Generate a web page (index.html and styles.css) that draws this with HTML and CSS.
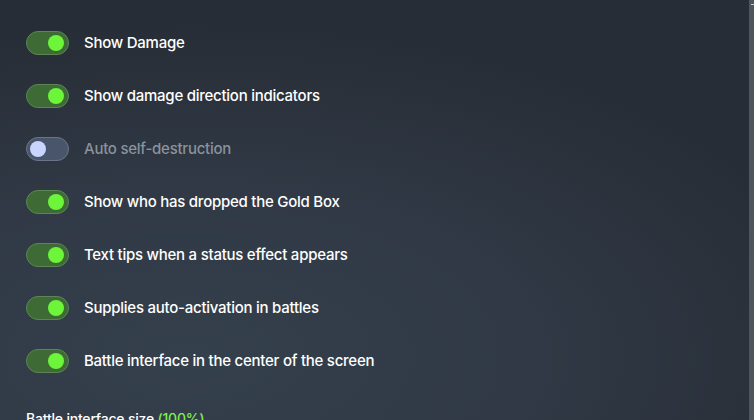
FILE: index.html
```html
<!DOCTYPE html>
<html>
<head>
<meta charset="utf-8">
<link rel="stylesheet" href="styles.css">
</head>
<body>
<div class="page">
  <div class="list">
    <div class="row"><span class="toggle on"><span class="knob"></span></span><span class="label">Show Damage</span></div>
    <div class="row"><span class="toggle on"><span class="knob"></span></span><span class="label">Show damage direction indicators</span></div>
    <div class="row"><span class="toggle off"><span class="knob"></span></span><span class="label dim">Auto self-destruction</span></div>
    <div class="row"><span class="toggle on"><span class="knob"></span></span><span class="label">Show who has dropped the Gold Box</span></div>
    <div class="row"><span class="toggle on"><span class="knob"></span></span><span class="label">Text tips when a status effect appears</span></div>
    <div class="row"><span class="toggle on"><span class="knob"></span></span><span class="label">Supplies auto-activation in battles</span></div>
    <div class="row"><span class="toggle on"><span class="knob"></span></span><span class="label">Battle interface in the center of the screen</span></div>
  </div>
  <div class="size">Battle interface size <span class="pct">(100%)</span></div>
</div>
<div class="scrollbar"><span class="arrow"></span></div>
</body>
</html>
```
FILE: styles.css
```css
html, body {
  margin: 0;
  padding: 0;
  height: 100%;
  overflow: hidden;
}
body {
  background: radial-gradient(ellipse 90% 80% at 25% 85%, #35404d 0%, #303945 50%, #272d36 100%);
  font-family: "Inter", "Roboto", sans-serif;
  color: #ffffff;
}
.page {
  padding: 31px 0 0 26px;
}
.list {
  display: flex;
  flex-direction: column;
  gap: 29px;
}
.row {
  display: flex;
  align-items: center;
  gap: 15px;
  height: 24px;
}
.toggle {
  position: relative;
  box-sizing: border-box;
  width: 43px;
  height: 24px;
  border-radius: 12px;
  flex: none;
  display: flex;
  align-items: center;
}
.toggle.on {
  background: #3e6a36;
  border: 1px solid #5b8653;
  justify-content: flex-end;
  padding-right: 4px;
}
.toggle.off {
  background: #49556a;
  border: 1px solid #6a7588;
  justify-content: flex-start;
  padding-left: 3px;
}
.knob {
  width: 16px;
  height: 16px;
  border-radius: 50%;
}
.on .knob { background: #6df53a; }
.off .knob { background: #c9d5ff; }
.label {
  font-size: 15px;
  font-weight: 500;
  letter-spacing: -0.25px;
  line-height: 24px;
  white-space: nowrap;
}
.label.dim { color: #8a929c; }
.size {
  margin-top: 36px;
  font-size: 14px;
  font-weight: 500;
  letter-spacing: -0.2px;
  line-height: 20px;
}
.pct { color: #7cf04a; }
.scrollbar {
  position: absolute;
  top: 0;
  right: 0;
  width: 5px;
  height: 100%;
  background: #4d555e;
}
.arrow {
  position: absolute;
  top: 4px;
  right: 0;
  width: 3px;
  height: 1px;
  background: #c8ccd0;
}
```
